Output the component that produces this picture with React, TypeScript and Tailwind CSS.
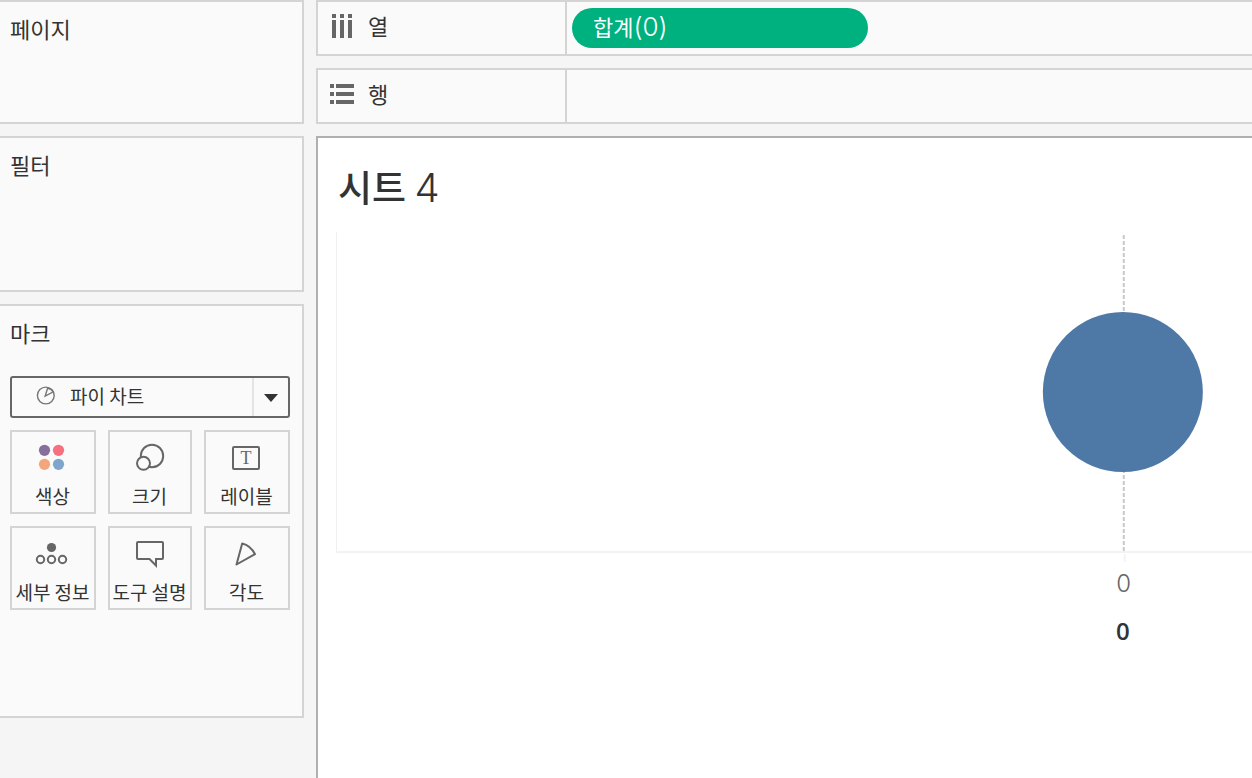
import type { ReactNode } from "react";

const cards =
  "border-2 border-l-0 border-[#d4d4d4] bg-[#fafafa] pl-[10px]";

function Card({ title, className, children }: { title: string; className: string; children?: ReactNode }) {
  return (
    <section className={`${cards} ${className}`}>
      <h2 className="pt-[10px] text-[22px] leading-8">{title}</h2>
      {children}
    </section>
  );
}

function Shelf({ label, icon, children }: { label: string; icon: ReactNode; children?: ReactNode }) {
  return (
    <section className="flex h-14 border-2 border-r-0 border-[#d4d4d4] bg-[#fafafa]">
      <h2 className="flex w-[249px] shrink-0 items-center gap-3 border-r-2 border-[#d4d4d4] pb-1 pl-3 text-[22px] leading-8">
        {icon}
        <span className="pb-[2px]">{label}</span>
      </h2>
      <div className="flex flex-1 items-center pl-[5px]">{children}</div>
    </section>
  );
}

function MarkButton({ label, children }: { label: string; children: ReactNode }) {
  return (
    <button
      type="button"
      className="flex h-21 flex-col items-center border-2 border-[#d4d4d4] pt-[9px] text-[19px] leading-7 whitespace-nowrap"
    >
      <svg width="36" height="32" viewBox="0 0 36 32" fill="none" stroke="#666" strokeWidth="2" aria-hidden="true">
        {children}
      </svg>
      <span className="pt-[9px] pr-px">{label}</span>
    </button>
  );
}

function ColumnsIcon() {
  return (
    <svg width="26" height="24" viewBox="0 0 26 24" fill="#666" aria-hidden="true">
      {[2, 10, 18].map((x) => (
        <g key={x}>
          <rect x={x} y="0" width="4" height="4" />
          <rect x={x} y="6" width="4" height="18" />
        </g>
      ))}
    </svg>
  );
}

function RowsIcon() {
  return (
    <svg width="26" height="24" viewBox="0 0 26 24" fill="#666" aria-hidden="true">
      {[2, 10, 18].map((y) => (
        <g key={y}>
          <rect x="0" y={y} width="4" height="4" />
          <rect x="6" y={y} width="18" height="4" />
        </g>
      ))}
    </svg>
  );
}

function Chart() {
  return (
    <svg className="block h-[420px] w-full" role="img" aria-label="파이 차트">
      <line x1="0.5" x2="0.5" y1="0" y2="320" stroke="#f0f0f0" />
      <line x1="0" x2="100%" y1="320" y2="320" stroke="#f3f3f3" strokeWidth="2" />
      <line x1="86%" x2="86%" y1="3" y2="319" stroke="#c8c8c8" strokeWidth="2" strokeDasharray="4 2" />
      <line x1="86.1%" x2="86.1%" y1="322" y2="330" stroke="#f3f3f3" strokeWidth="2" />
      <circle cx="85.9%" cy="160" r="80" fill="#4e79a7" />
      <text x="86%" y="360" textAnchor="middle" fill="#666" className="font-['Inter'] text-2xl font-light">
        0
      </text>
      <text x="85.9%" y="408" textAnchor="middle" fill="#333" className="font-['Open_Sans'] text-2xl font-semibold">
        0
      </text>
    </svg>
  );
}

export default function App() {
  return (
    <div className="flex min-h-screen gap-3 bg-[#f5f5f5] font-['Noto_Sans_CJK_KR',sans-serif] text-[#333]">
      <aside className="flex w-[304px] shrink-0 flex-col gap-3">
        <Card title="페이지" className="h-31" />
        <Card title="필터" className="h-39" />
        <Card title="마크" className="h-[414px] pr-3">
          <div className="relative mt-7">
            <select
              aria-label="마크 유형"
              className="block h-[42px] w-full appearance-none rounded-[3px] border-2 border-[#666] bg-transparent pb-[2px] pl-[58px] text-[19px]"
            >
              <option>파이 차트</option>
            </select>
            <svg
              className="pointer-events-none absolute top-[9px] left-[25px]"
              width="22"
              height="22"
              viewBox="0 0 22 22"
              fill="none"
              stroke="#777"
              strokeWidth="1.4"
              aria-hidden="true"
            >
              <circle cx="10.8" cy="10.5" r="8.4" />
              <path d="M10.2 11 L12.6 3.2 Q16.2 3.6 18.3 6.8 Z" />
            </svg>
            <div className="pointer-events-none absolute inset-y-[2px] right-[2px] flex w-9 items-center justify-center border-l-2 border-[#e4e4e4]">
              <svg className="mt-[2px]" width="14" height="8" viewBox="0 0 14 8" fill="#333" aria-hidden="true">
                <path d="M0 0H14L7 8Z" />
              </svg>
            </div>
          </div>
          <div className="mt-3 grid grid-cols-[86fr_84fr_86fr] gap-3">
            <MarkButton label="색상">
              <g stroke="none">
                <circle cx="9.5" cy="9.3" r="5.6" fill="#86709b" />
                <circle cx="23.5" cy="9.3" r="5.6" fill="#f7707f" />
                <circle cx="9.5" cy="23.3" r="5.6" fill="#f3a67c" />
                <circle cx="23.5" cy="23.3" r="5.6" fill="#80a5cc" />
              </g>
            </MarkButton>
            <MarkButton label="크기">
              <circle cx="20" cy="15" r="11.2" />
              <circle cx="11.5" cy="22.3" r="6.5" fill="#fafafa" />
            </MarkButton>
            <MarkButton label="레이블">
              <rect x="4" y="6" width="26" height="22" rx="1" />
              <text
                x="17"
                y="23"
                textAnchor="middle"
                fill="#666"
                stroke="none"
                className="font-['Liberation_Serif'] text-lg"
              >
                T
              </text>
            </MarkButton>
            <MarkButton label="세부 정보">
              <circle cx="16.5" cy="10.5" r="4.6" fill="#666" stroke="none" />
              <circle cx="5.5" cy="22.5" r="3.7" />
              <circle cx="16.5" cy="22.5" r="3.7" />
              <circle cx="27.5" cy="22.5" r="3.7" />
            </MarkButton>
            <MarkButton label="도구 설명">
              <path d="M6 5H30Q31 5 31 6V21Q31 22 30 22H24V28.5L17.5 22H6Q5 22 5 21V6Q5 5 6 5Z" />
            </MarkButton>
            <MarkButton label="각도">
              <path strokeLinejoin="round" d="M13.2 6.5Q21.5 8.5 26 17.2L7.5 27.5Z" />
            </MarkButton>
          </div>
        </Card>
      </aside>
      <main className="flex min-w-0 flex-1 flex-col gap-3">
        <Shelf label="열" icon={<ColumnsIcon />}>
          <button
            type="button"
            className="h-10 w-[296px] rounded-full bg-[#00b180] pb-1 pl-[21px] text-left text-[22px] leading-8 text-white"
          >
            합계<span className="font-['Inter'] text-[26px] font-light">(0)</span>
          </button>
        </Shelf>
        <Shelf label="행" icon={<RowsIcon />} />
        <section className="flex-1 border-t-2 border-l-2 border-[#b0b0b0] bg-white pl-[18px]">
          <h1 className="pt-[22px] pb-[18px] pl-[2px] text-[37px] leading-[52px] font-medium">
            시트 <span className="font-['Inter'] text-[40px] font-light">4</span>
          </h1>
          <Chart />
        </section>
      </main>
    </div>
  );
}
